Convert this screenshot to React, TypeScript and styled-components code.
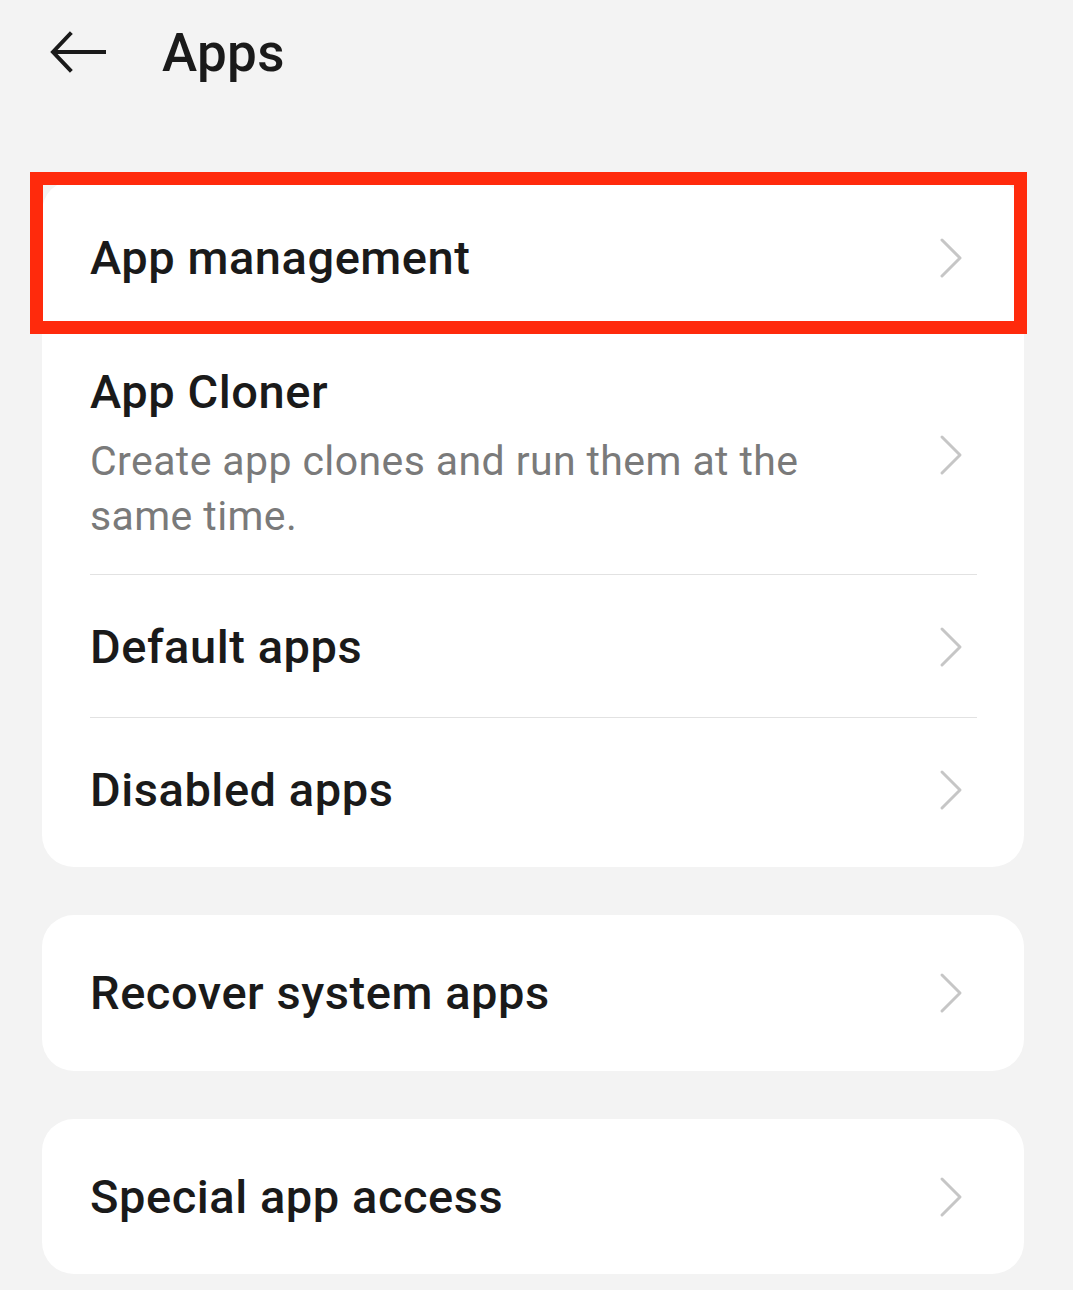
import React from "react";
import styled, { createGlobalStyle } from "styled-components";

const Global = createGlobalStyle`
  html, body { margin: 0; padding: 0; background: #f3f3f3; }
  body { font-family: Roboto, "Noto Sans", Arial, sans-serif; -webkit-font-smoothing: antialiased; }
`;

const Page = styled.div`
  width: 1073px;
  min-height: 1290px;
  background: #f3f3f3;
  display: flex;
  flex-direction: column;
`;

const Header = styled.header`
  height: 106px;
  display: flex;
  align-items: center;
  padding: 0 0 0 50px;
  box-sizing: border-box;
`;

const BackButton = styled.button`
  width: 56px;
  height: 44px;
  padding: 0;
  margin: 0 56px 0 0;
  border: none;
  background: none;
  display: flex;
  align-items: center;
  justify-content: flex-start;
`;

const Title = styled.h1`
  margin: 0;
  font-size: 53px;
  font-weight: 500;
  color: #1a1a1a;
  line-height: 60px;
  letter-spacing: 0.3px;
`;

const Cards = styled.div`
  display: flex;
  flex-direction: column;
  gap: 48px;
  padding: 74px 49px 0 42px;
`;

const Card = styled.section<{ $pb?: number }>`
  position: relative;
  background: #ffffff;
  border-radius: 32px;
  padding-bottom: ${(p) => p.$pb ?? 0}px;
`;

const Row = styled.div<{ $h: number; $divider?: boolean }>`
  position: relative;
  min-height: ${(p) => p.$h}px;
  box-sizing: border-box;
  display: flex;
  align-items: center;
  padding: 0 59px 0 48px;
  ${(p) =>
    p.$divider
      ? `&::after { content: ""; position: absolute; left: 48px; right: 47px; bottom: 0; height: 1px; background: #e2e2e2; }`
      : ""}
`;

const RowText = styled.div<{ $pt?: number; $pb?: number }>`
  flex: 1;
  display: flex;
  flex-direction: column;
  gap: 14px;
  padding: ${(p) => p.$pt ?? 0}px 0 ${(p) => p.$pb ?? 0}px 0;
`;

const ItemTitle = styled.div`
  font-size: 47px;
  font-weight: 500;
  color: #1a1a1a;
  line-height: 56px;
  letter-spacing: 0.55px;
`;

const ItemSub = styled.div`
  font-size: 41px;
  font-weight: 400;
  color: #7a7a7a;
  line-height: 55px;
  letter-spacing: 0.4px;
  max-width: 760px;
`;

const Highlight = styled.div`
  position: absolute;
  left: -12px;
  right: -3px;
  top: -8px;
  height: 162px;
  box-sizing: border-box;
  border: 13px solid #ff2a0c;
  pointer-events: none;
`;

const Chevron = () => (
  <svg width="26" height="44" viewBox="0 0 26 44" fill="none">
    <path d="M3 4 L21 22 L3 40" stroke="#c6c6c6" strokeWidth="3" strokeLinecap="round" strokeLinejoin="round" />
  </svg>
);

const BackArrow = () => (
  <svg width="56" height="44" viewBox="0 0 56 44" fill="none">
    <path d="M54 21 H4 M20 3 L3 21 L20 39" stroke="#1a1a1a" strokeWidth="4" strokeLinecap="square" strokeLinejoin="miter" />
  </svg>
);

export default function App() {
  return (
    <Page>
      <Global />
      <Header>
        <BackButton aria-label="Back">
          <BackArrow />
        </BackButton>
        <Title>Apps</Title>
      </Header>
      <Cards>
        <Card $pb={5}>
          <Row $h={155}>
            <RowText>
              <ItemTitle>App management</ItemTitle>
            </RowText>
            <Chevron />
          </Row>
          <Row $h={240} $divider>
            <RowText $pt={0} $pb={2}>
              <ItemTitle>App Cloner</ItemTitle>
              <ItemSub>Create app clones and run them at the same time.</ItemSub>
            </RowText>
            <Chevron />
          </Row>
          <Row $h={143} $divider>
            <RowText>
              <ItemTitle>Default apps</ItemTitle>
            </RowText>
            <Chevron />
          </Row>
          <Row $h={144}>
            <RowText>
              <ItemTitle>Disabled apps</ItemTitle>
            </RowText>
            <Chevron />
          </Row>
          <Highlight />
        </Card>
        <Card>
          <Row $h={156}>
            <RowText>
              <ItemTitle>Recover system apps</ItemTitle>
            </RowText>
            <Chevron />
          </Row>
        </Card>
        <Card>
          <Row $h={155}>
            <RowText>
              <ItemTitle>Special app access</ItemTitle>
            </RowText>
            <Chevron />
          </Row>
        </Card>
      </Cards>
    </Page>
  );
}
